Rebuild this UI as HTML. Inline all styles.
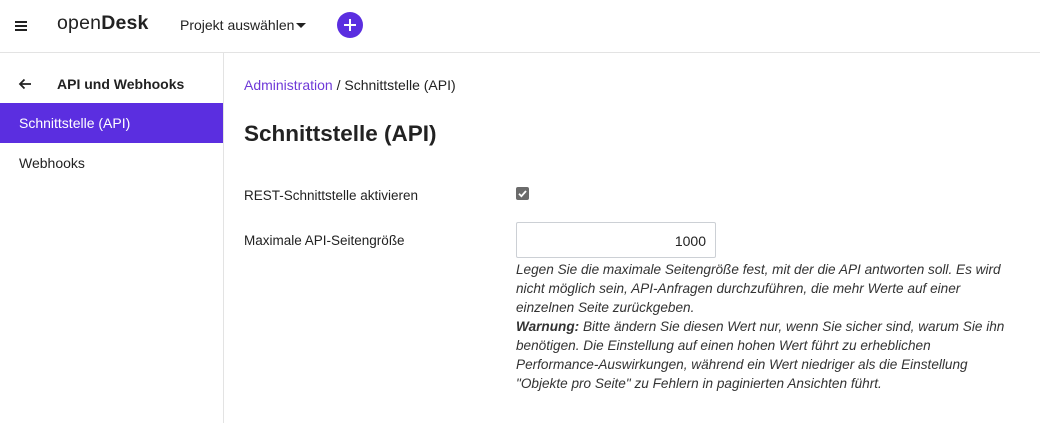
<!DOCTYPE html>
<html><head><meta charset="utf-8"><style>
*{box-sizing:border-box;margin:0;padding:0}
body{width:1040px;height:423px;overflow:hidden;background:#fff;font-family:"Liberation Sans",sans-serif;color:#222;position:relative}
.abs{position:absolute;white-space:nowrap}
.hdr{position:absolute;left:0;top:0;width:1040px;height:53px;border-bottom:1px solid #e3e3e3}
.side{position:absolute;left:0;top:53px;width:224px;height:370px;border-right:1px solid #e3e3e3}
.help{position:absolute;left:516px;top:260px;font-style:italic;font-size:13.6px;line-height:19px;color:#333;white-space:nowrap}
</style></head><body>
<div class="hdr"></div>
<div class="abs" style="left:15px;top:21px;width:12px;height:2px;background:#222;box-shadow:0 4px 0 #222,0 8px 0 #222"></div>
<div class="abs" style="left:57px;top:12px;font-size:19.5px;color:#222;letter-spacing:0.2px">open<b style="font-weight:900">Desk</b></div>
<div class="abs" style="left:180px;top:17px;font-size:14px;color:#222">Projekt auswählen</div>
<div class="abs" style="left:296px;top:23px;width:0;height:0;border-left:5px solid transparent;border-right:5px solid transparent;border-top:5px solid #222"></div>
<div class="abs" style="left:337px;top:12px;width:26px;height:26px;border-radius:50%;background:#5b2ee0"></div>
<div class="abs" style="left:344px;top:24px;width:12px;height:2px;background:#fff"></div>
<div class="abs" style="left:349px;top:19px;width:2px;height:12px;background:#fff"></div>
<div class="side"></div>
<svg class="abs" style="left:18px;top:78px" width="14" height="12"><path d="M13 6H2M6.5 1.5L2 6L6.5 10.5" stroke="#222" stroke-width="1.8" fill="none"/></svg>
<div class="abs" style="left:57px;top:76px;font-size:14px;font-weight:bold">API und Webhooks</div>
<div class="abs" style="left:0;top:103px;width:223px;height:40px;background:#5b2ee0"></div>
<div class="abs" style="left:19px;top:115px;font-size:14px;color:#fff">Schnittstelle (API)</div>
<div class="abs" style="left:19px;top:155px;font-size:14px">Webhooks</div>
<div class="abs" style="left:244px;top:77px;font-size:14px"><span style="color:#6f3ad8">Administration</span> / Schnittstelle (API)</div>
<div class="abs" style="left:244px;top:121px;font-size:22.5px;font-weight:bold;color:#222">Schnittstelle (API)</div>
<div class="abs" style="left:244px;top:188px;font-size:13.5px">REST-Schnittstelle aktivieren</div>
<div class="abs" style="left:516px;top:187px;width:13px;height:13px;border-radius:2px;background:#6b6b6b"></div>
<svg class="abs" style="left:516px;top:187px" width="13" height="13"><path d="M3 6.8L5.4 9.2L10 4" stroke="#fff" stroke-width="1.8" fill="none"/></svg>
<div class="abs" style="left:244px;top:233px;font-size:13.5px">Maximale API-Seitengröße</div>
<div class="abs" style="left:516px;top:222px;width:200px;height:36px;border:1px solid #ccd0d5;border-radius:2px;text-align:right;padding:10px 9px 0 0;font-size:14px">1000</div>
<div class="help">Legen Sie die maximale Seitengröße fest, mit der die API antworten soll. Es wird<br>nicht möglich sein, API-Anfragen durchzuführen, die mehr Werte auf einer<br>einzelnen Seite zurückgeben.<br><b>Warnung:</b> Bitte ändern Sie diesen Wert nur, wenn Sie sicher sind, warum Sie ihn<br>benötigen. Die Einstellung auf einen hohen Wert führt zu erheblichen<br>Performance-Auswirkungen, während ein Wert niedriger als die Einstellung<br>"Objekte pro Seite" zu Fehlern in paginierten Ansichten führt.</div>
</body></html>
